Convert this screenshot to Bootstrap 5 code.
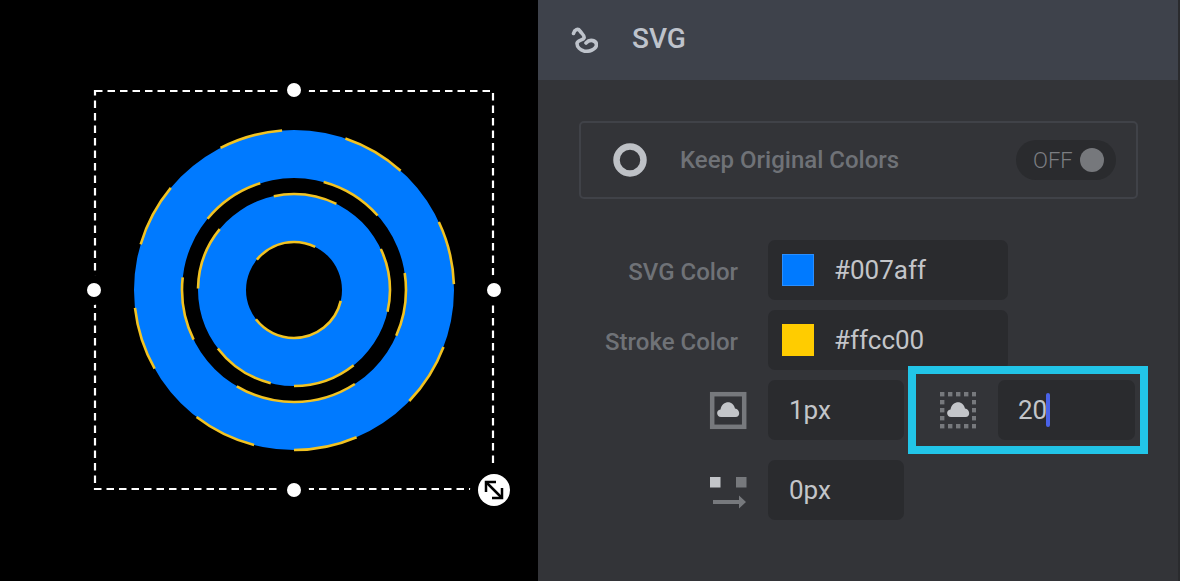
<!DOCTYPE html>
<html lang="en">
<head>
<meta charset="utf-8">
<title>SVG layer settings</title>
<link rel="stylesheet" href="https://cdn.jsdelivr.net/npm/bootstrap@5.3.0/dist/css/bootstrap.min.css">
<style>
html,body{height:100%;}
body{background:#000;font-family:Roboto,"Liberation Sans",sans-serif;overflow:hidden;}
.stage{width:538px;height:581px;flex:none;display:block;}
.side{width:642px;height:581px;background:#333438;border-right:2px solid #2a2b2e;}
.side-head{height:80px;background:#3e424b;padding-left:32px;padding-bottom:3px;}
.side-head svg{width:28px;height:28px;margin-right:34px;flex:none;}
.side-title{font-size:28px;font-weight:500;color:#bec3cb;line-height:1;}
.side-body{padding:41px 40px 0 41px;}
.toggle-card{height:78px;width:559px;border:2px solid #404248;border-radius:5px;padding-left:32px;padding-right:20px;}
.toggle-card>svg{width:34px;height:34px;margin-right:33px;flex:none;}
.toggle-label{font-size:24px;font-weight:500;color:#6f7277;line-height:1;}
.pill{width:100px;height:40px;background:#2a2b2e;border-radius:20px;padding:0 12px 0 17px;}
.pill-text{font-size:22px;font-weight:300;color:#7c7e82;line-height:1;margin-top:1px;}
.pill-dot{width:24px;height:24px;border-radius:50%;background:#76787c;}
.rows{margin-top:41px;}
.prop{height:60px;}
.prop+.prop{margin-top:10px;}
.prop-spaced{margin-top:20px!important;}
.prop-label{width:159px;text-align:right;font-size:24px;font-weight:500;color:#6f7277;line-height:1;flex:none;margin-right:30px;margin-top:4px;}
.prop-icon{width:159px;flex:none;margin-right:30px;text-align:right;line-height:0;}
.prop-icon svg{width:36px;height:37px;margin-right:-8px;overflow:visible;}
.fieldbox{height:60px;background:#2a2b2e;border-radius:7px;color:#c3c5c9;font-size:26px;line-height:1;flex:none;}
.field-wide{width:240px;padding-left:14px;}
.field-short{width:136px;padding-left:21px;}
.swatch{width:32px;height:32px;margin-right:20px;flex:none;}
.swatch-blue{background:#007aff;border:1px solid #2a8fff;}
.swatch-yellow{background:#ffcc00;}
.spot{width:240px;height:88px;margin:-14px 0 -14px 4px;border:8px solid #22c5e8;flex:none;padding-left:24px;z-index:1;}
.spot>svg{width:36px;height:37px;margin-right:22px;flex:none;}
.spot .fieldbox{width:137px;padding-left:20px;}
.caret-bar{width:4px;height:34px;background:#4a63e8;border-radius:2px;margin-left:-1px;}
</style>
</head>
<body class="d-flex m-0">
<svg class="stage" viewBox="0 0 538 581" xmlns="http://www.w3.org/2000/svg" aria-label="Preview of a blue ring shape">
  <rect width="538" height="581" fill="#000"/>
  <path fill="#007aff" fill-rule="evenodd" stroke="#f2c322" stroke-width="2.6" stroke-dasharray="64.3 64.3"
    d="M294 450A160 160 0 0 0 294 130A160 160 0 0 0 294 450Z
       M294 402A112 112 0 0 0 294 178A112 112 0 0 0 294 402Z
       M294 386A96 96 0 0 0 294 194A96 96 0 0 0 294 386Z
       M294 338A48 48 0 0 0 294 242A48 48 0 0 0 294 338Z"/>
  <rect x="95" y="91" width="398" height="398" fill="none" stroke="#fff" stroke-width="2.2" stroke-dasharray="7.500 5"/>
  <g fill="#fff" stroke="#000" stroke-width="16" paint-order="stroke">
    <circle cx="294" cy="90" r="7"/>
    <circle cx="94" cy="290" r="7"/>
    <circle cx="494" cy="290" r="7"/>
    <circle cx="294" cy="490" r="7"/>
    <circle cx="494" cy="490" r="16"/>
  </g>
  <g fill="none" stroke="#000" stroke-width="2.5">
    <path d="M486.500 482.500L501.500 497.500"/>
    <path d="M486 492V482H496"/>
    <path d="M492 498H502V488"/>
  </g>
</svg>

<div class="side">
  <div class="side-head d-flex align-items-center">
    <svg viewBox="0 0 28 28" fill="none" stroke="#bec3cb" stroke-width="3.6" stroke-linecap="round" stroke-linejoin="round" aria-hidden="true">
      <path d="M3.500 8.500C4.500 4.500 8 3 10 6C11.500 8.500 15 10.500 14 13C13 15.500 7 15 7 18.500C7 22 10.500 25 14 26C18 27 26 25 26.500 20C26.500 15.500 20 13.500 16 18"/>
    </svg>
    <span class="side-title">SVG</span>
  </div>
  <div class="side-body">
    <div class="toggle-card d-flex align-items-center">
      <svg viewBox="0 0 34 34" aria-hidden="true"><circle cx="17" cy="17" r="13.500" fill="none" stroke="#bec1c6" stroke-width="6.500"/></svg>
      <span class="toggle-label flex-grow-1">Keep Original Colors</span>
      <div class="pill d-flex align-items-center justify-content-between">
        <span class="pill-text">OFF</span>
        <span class="pill-dot"></span>
      </div>
    </div>

    <div class="rows">
      <div class="prop d-flex align-items-center">
        <div class="prop-label">SVG Color</div>
        <div class="fieldbox field-wide d-flex align-items-center"><span class="swatch swatch-blue"></span><span>#007aff</span></div>
      </div>
      <div class="prop d-flex align-items-center">
        <div class="prop-label">Stroke Color</div>
        <div class="fieldbox field-wide d-flex align-items-center"><span class="swatch swatch-yellow"></span><span>#ffcc00</span></div>
      </div>
      <div class="prop d-flex align-items-center">
        <div class="prop-icon">
          <svg viewBox="0 0 36 37" aria-hidden="true">
            <rect x="2.200" y="2.200" width="32" height="32.600" fill="none" stroke="#77797d" stroke-width="4.500"/>
            <path fill="#c3c5c9" d="M11 25C6.500 25 5.500 18 10.500 17.500C11.500 12 16 9.500 20 10.500C23 11.500 24.500 14 25 16.500C30 17 31 25 25.500 25Z"/>
          </svg>
        </div>
        <div class="fieldbox field-short d-flex align-items-center"><span>1px</span></div>
        <div class="spot d-flex align-items-center">
          <svg viewBox="0 0 36 37" aria-hidden="true">
            <g fill="#77797d">
              <rect x="0" y="0" width="4.400" height="4.400"/><rect x="8" y="0" width="4.400" height="4.400"/><rect x="16" y="0" width="4.400" height="4.400"/><rect x="24" y="0" width="4.400" height="4.400"/><rect x="32" y="0" width="4.400" height="4.400"/>
              <rect x="0" y="32" width="4.400" height="4.400"/><rect x="8" y="32" width="4.400" height="4.400"/><rect x="16" y="32" width="4.400" height="4.400"/><rect x="24" y="32" width="4.400" height="4.400"/><rect x="32" y="32" width="4.400" height="4.400"/>
              <rect x="0" y="8" width="4.400" height="4.400"/><rect x="0" y="16" width="4.400" height="4.400"/><rect x="0" y="24" width="4.400" height="4.400"/>
              <rect x="32" y="8" width="4.400" height="4.400"/><rect x="32" y="16" width="4.400" height="4.400"/><rect x="32" y="24" width="4.400" height="4.400"/>
            </g>
            <path fill="#c3c5c9" d="M11 25C6.500 25 5.500 18 10.500 17.500C11.500 12 16 9.500 20 10.500C23 11.500 24.500 14 25 16.500C30 17 31 25 25.500 25Z"/>
          </svg>
          <div class="fieldbox d-flex align-items-center"><span>20</span><span class="caret-bar"></span></div>
        </div>
      </div>
      <div class="prop prop-spaced d-flex align-items-center">
        <div class="prop-icon">
          <svg viewBox="0 0 36 37" aria-hidden="true">
            <rect x="0" y="5" width="10.500" height="10.500" fill="#c3c5c9"/>
            <rect x="26" y="5" width="10.500" height="10.500" fill="#77797d"/>
            <path d="M3 28H29V23.500L36 30L29 36.500V32H3Z" fill="#77797d"/>
          </svg>
        </div>
        <div class="fieldbox field-short d-flex align-items-center"><span>0px</span></div>
      </div>
    </div>
  </div>
</div>
<script src="https://cdn.jsdelivr.net/npm/bootstrap@5.3.0/dist/js/bootstrap.bundle.min.js"></script>
</body>
</html>
